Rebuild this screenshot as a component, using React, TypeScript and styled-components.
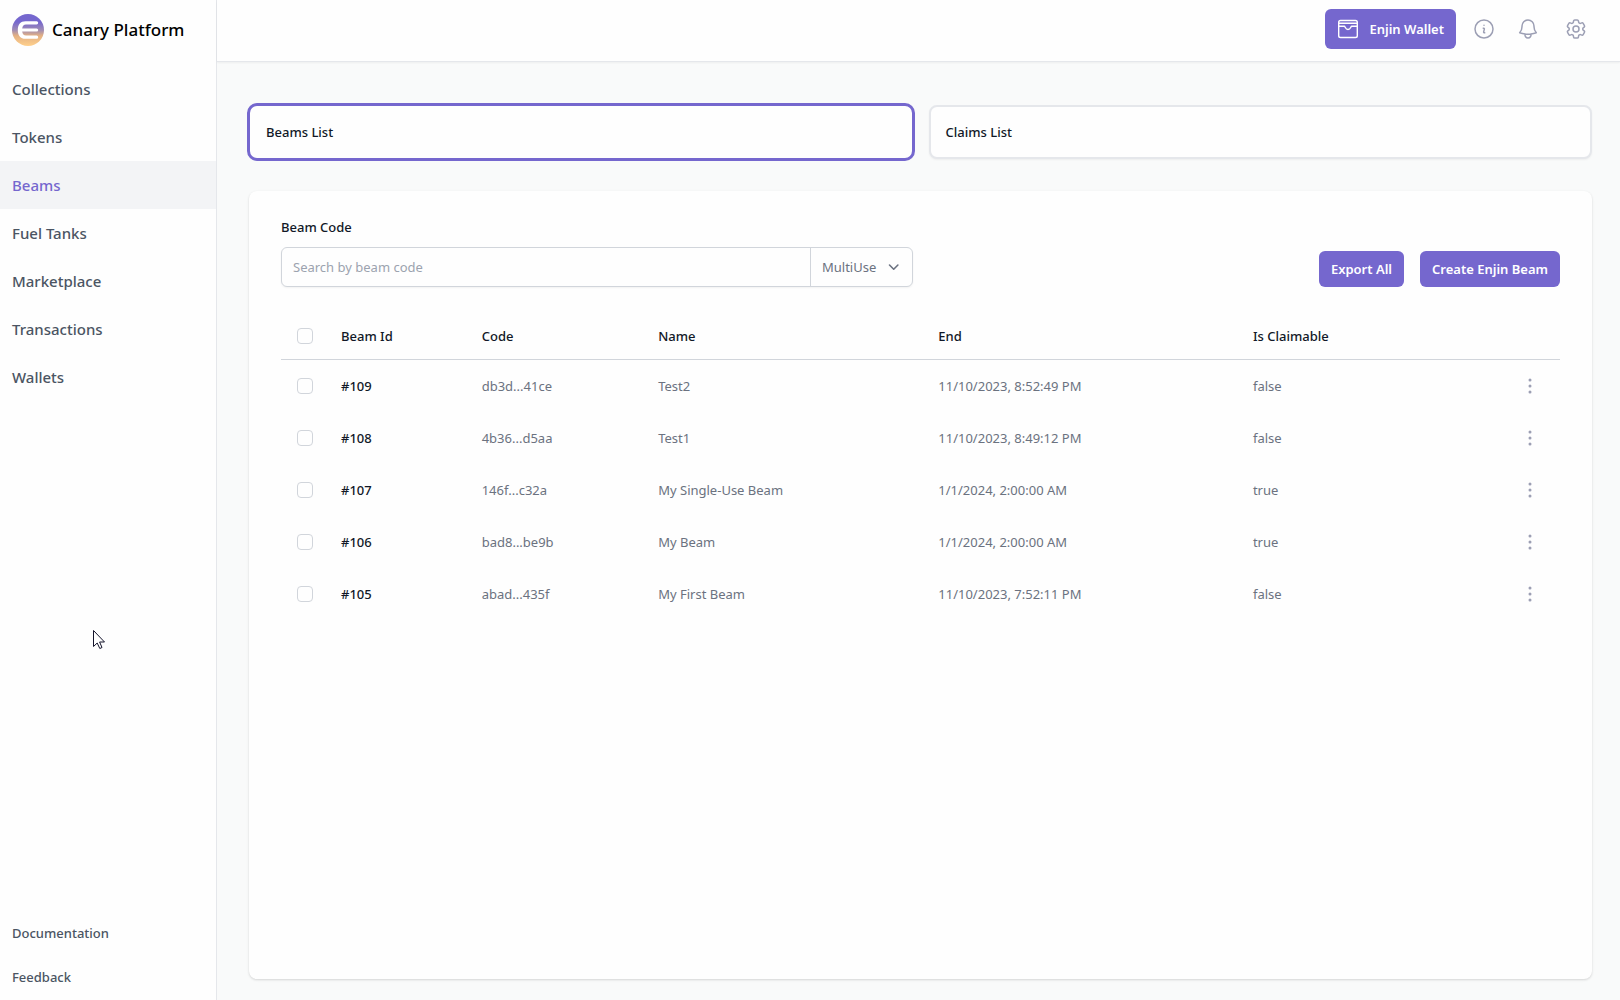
import React from "react";
import styled, { createGlobalStyle } from "styled-components";
import {
  HiOutlineBell,
  HiOutlineCog6Tooth,
  HiOutlineEllipsisVertical,
  HiOutlineInformationCircle,
} from "react-icons/hi2";

const color = {
  brand: "#7567ce",
  ink: "#111827",
  nav: "#4b5563",
  muted: "#6b7280",
  icon: "#9c9fb4",
  line: "#e5e7eb",
  field: "#d1d5db",
  surface: "#fefefe",
  page: "#f9fafa",
};

const GlobalStyle = createGlobalStyle`
  *, *::before, *::after { box-sizing: border-box; }
  body {
    margin: 0;
    background: ${color.page};
    color: ${color.ink};
    font-family: "Segoe UI", "Noto Sans", "Open Sans", sans-serif;
    font-size: 13px;
    line-height: 20px;
  }
  button, input, select { font: inherit; }
`;

const Shell = styled.div`
  display: flex;
  min-height: 100vh;
`;

const Sidebar = styled.aside`
  display: flex;
  flex-direction: column;
  flex: none;
  width: 217px;
  padding-bottom: 1px;
  background: ${color.surface};
  border-right: 1px solid ${color.line};
`;

const Brand = styled.a`
  display: flex;
  align-items: center;
  gap: 8px;
  height: 65px;
  padding: 0 12px 6px;
  color: #000;
  font-size: 17px;
  font-weight: 500;
  line-height: 28px;
  text-decoration: none;
  white-space: nowrap;
`;

const Nav = styled.nav`
  display: flex;
  flex-direction: column;
`;

const FooterNav = styled(Nav)`
  margin-top: auto;
`;

const NavLink = styled.a<{ $active?: boolean }>`
  padding: 12px;
  background: ${(p) => (p.$active ? "#f3f4f6" : "transparent")};
  color: ${(p) => (p.$active ? color.brand : color.nav)};
  font-size: 15px;
  font-weight: 500;
  line-height: 24px;
  text-decoration: none;
`;

const FooterLink = styled(NavLink)`
  font-size: 13px;
  line-height: 20px;
`;

const Column = styled.div`
  display: flex;
  flex-direction: column;
  flex: 1;
  min-width: 0;
`;

const TopBar = styled.header`
  display: flex;
  align-items: center;
  justify-content: flex-end;
  height: 62px;
  padding: 0 32px 4px 32px;
  background: ${color.surface};
  border-bottom: 1px solid ${color.line};
  box-shadow: 0 1px 2px rgba(0, 0, 0, 0.05);
`;

const Button = styled.button<{ $large?: boolean }>`
  display: inline-flex;
  align-items: center;
  justify-content: center;
  gap: 10px;
  height: ${(p) => (p.$large ? 40 : 36)}px;
  padding: 0 12px;
  border: 0;
  border-radius: 6px;
  background: ${color.brand};
  color: #fff;
  font-size: 13px;
  font-weight: 600;
  white-space: nowrap;
`;

const IconGroup = styled.div`
  display: flex;
  gap: 20px;
  margin: 0 24px 0 16px;
`;

const IconButton = styled.button`
  display: inline-flex;
  align-items: center;
  justify-content: center;
  width: 24px;
  height: 24px;
  padding: 0;
  border: 0;
  background: none;
  color: ${color.icon};
  vertical-align: middle;
`;

const Main = styled.main`
  display: flex;
  flex-direction: column;
  flex: 1;
  gap: 32px;
  padding: 43px 28px 21px 32px;
`;

const Tabs = styled.div`
  display: grid;
  grid-template-columns: 1fr 1fr;
  gap: 16px;
`;

const Tab = styled.button<{ $active?: boolean }>`
  padding: 15px;
  border: 2px solid ${(p) => (p.$active ? color.surface : color.line)};
  border-radius: 8px;
  background: ${color.surface};
  box-shadow: ${(p) => (p.$active ? "none" : "0 1px 2px rgba(0, 0, 0, 0.05)")};
  outline: ${(p) => (p.$active ? `3px solid ${color.brand}` : "none")};
  outline-offset: -1px;
  color: ${color.ink};
  font-weight: 500;
  text-align: left;
`;

const Card = styled.section`
  flex: 1;
  padding: 26px 32px 32px;
  border-radius: 8px;
  background: ${color.surface};
  box-shadow: 0 1px 3px rgba(0, 0, 0, 0.1), 0 1px 2px rgba(0, 0, 0, 0.06);
`;

const Toolbar = styled.div`
  display: flex;
  align-items: flex-end;
  justify-content: space-between;
  gap: 32px;
`;

const Search = styled.div`
  flex: 0 1 632px;
`;

const Label = styled.label`
  display: block;
  margin-bottom: 10px;
  font-weight: 500;
`;

const Field = styled.div`
  display: flex;
  height: 40px;
  border: 1px solid ${color.field};
  border-radius: 6px;
  background: ${color.surface};
  box-shadow: 0 1px 2px rgba(0, 0, 0, 0.05);
`;

const TextInput = styled.input`
  flex: 1;
  min-width: 0;
  padding: 0 11px;
  border: 0;
  background: none;
  color: ${color.ink};
  &::placeholder { color: #9ca3af; opacity: 1; }
`;

const SelectWrap = styled.div`
  display: grid;
  align-items: center;
  width: 102px;
  border-left: 1px solid ${color.field};
  color: ${color.muted};
  & > * { grid-area: 1 / 1; }
  & > svg { justify-self: end; margin-right: 11px; pointer-events: none; }
`;

const Select = styled.select`
  width: 100%;
  height: 38px;
  padding: 0 11px;
  border: 0;
  background: none;
  color: ${color.muted};
  appearance: none;
`;

const Actions = styled.div`
  display: flex;
  gap: 16px;
`;

const Table = styled.table`
  width: 100%;
  margin-top: 23px;
  border-collapse: separate;
  border-spacing: 0;
  table-layout: fixed;
`;

const Col = styled.col<{ $width?: string }>`
  width: ${(p) => p.$width ?? "auto"};
`;

const HeadCell = styled.th`
  height: 50px;
  padding: 2px 12px 0;
  border-bottom: 1px solid ${color.field};
  font-weight: 500;
  text-align: left;
`;

const Cell = styled.td<{ $strong?: boolean }>`
  height: 52px;
  padding: 0 12px;
  color: ${(p) => (p.$strong ? color.ink : color.muted)};
  font-weight: ${(p) => (p.$strong ? 500 : 400)};
`;

const CheckCell = styled(Cell)`
  padding: 0 0 0 16px;
`;

const CheckHead = styled(HeadCell)`
  padding: 2px 0 0 16px;
`;

const ActionCell = styled(Cell)`
  padding: 0 18px;
  text-align: right;
`;

const Checkbox = styled.input`
  display: block;
  width: 16px;
  height: 16px;
  margin: 0;
  border: 1px solid ${color.field};
  border-radius: 4px;
  background: ${color.surface};
  appearance: none;
  &:checked { background: ${color.brand}; border-color: ${color.brand}; }
`;

const Pointer = styled.svg`
  position: absolute;
  left: 92px;
  top: 629px;
  pointer-events: none;
`;

const Logo = () => (
  <svg width="32" height="32" viewBox="0 0 32 32" aria-hidden="true">
    <defs>
      <linearGradient id="logoFill" x1="0" y1="0" x2="0" y2="1">
        <stop offset="0.25" stopColor="#7567ce" />
        <stop offset="0.5" stopColor="#a08cb4" />
        <stop offset="0.68" stopColor="#e4b183" />
        <stop offset="1" stopColor="#ffd08c" />
      </linearGradient>
    </defs>
    <circle cx="16" cy="16" r="16" fill="url(#logoFill)" />
    <path
      d="M24.600 7.200H13.500C8.500 7.200 5.800 10.500 5.800 16s2.700 8.800 7.700 8.800H24.600a1.600 1.600 0 0 0 0-3.200H14c-2.200 0-3.500-1.200-3.800-4H24.600a1.600 1.600 0 0 0 0-3.200H10.200c.3-2.800 1.600-4 3.800-4H24.600a1.600 1.600 0 0 0 0-3.200Z"
      fill="#fff"
    />
  </svg>
);

const WalletIcon = () => (
  <svg width="22" height="22" viewBox="0 0 22 22" fill="none" stroke="#fff" strokeWidth="1.400" strokeLinecap="round" strokeLinejoin="round" aria-hidden="true">
    <rect x="1.700" y="2.500" width="18.600" height="17" rx="1.800" />
    <path d="M1.700 5.300H20.300M1.700 8.200H7.300C8.300 8.200 8.200 11.500 11 11.500S13.700 8.200 14.700 8.200H20.300" />
  </svg>
);

const Chevron = () => (
  <svg width="16" height="16" viewBox="0 0 16 16" fill="none" stroke="currentColor" strokeWidth="1.600" strokeLinecap="round" strokeLinejoin="round" aria-hidden="true">
    <path d="M4.500 6L8.700 10.200L12.900 6" />
  </svg>
);

const sections = ["Collections", "Tokens", "Beams", "Fuel Tanks", "Marketplace", "Transactions", "Wallets"];

const columns = ["Beam Id", "Code", "Name", "End", "Is Claimable"];

const beams = [
  { id: "#109", code: "db3d...41ce", name: "Test2", end: "11/10/2023, 8:52:49 PM", claimable: false },
  { id: "#108", code: "4b36...d5aa", name: "Test1", end: "11/10/2023, 8:49:12 PM", claimable: false },
  { id: "#107", code: "146f...c32a", name: "My Single-Use Beam", end: "1/1/2024, 2:00:00 AM", claimable: true },
  { id: "#106", code: "bad8...be9b", name: "My Beam", end: "1/1/2024, 2:00:00 AM", claimable: true },
  { id: "#105", code: "abad...435f", name: "My First Beam", end: "11/10/2023, 7:52:11 PM", claimable: false },
];

export default function App() {
  return (
    <>
      <GlobalStyle />
      <Shell>
        <Sidebar>
          <Brand href="#">
            <Logo />
            Canary Platform
          </Brand>
          <Nav>
            {sections.map((name) => (
              <NavLink key={name} href="#" $active={name === "Beams"}>
                {name}
              </NavLink>
            ))}
          </Nav>
          <FooterNav>
            <FooterLink href="#">Documentation</FooterLink>
            <FooterLink href="#">Feedback</FooterLink>
          </FooterNav>
        </Sidebar>
        <Column>
          <TopBar>
            <Button $large>
              <WalletIcon />
              Enjin Wallet
            </Button>
            <IconGroup>
              <IconButton aria-label="Information">
                <HiOutlineInformationCircle size={24} />
              </IconButton>
              <IconButton aria-label="Notifications">
                <HiOutlineBell size={24} />
              </IconButton>
            </IconGroup>
            <IconButton aria-label="Settings">
              <HiOutlineCog6Tooth size={24} />
            </IconButton>
          </TopBar>
          <Main>
            <Tabs>
              <Tab $active>Beams List</Tab>
              <Tab>Claims List</Tab>
            </Tabs>
            <Card>
              <Toolbar>
                <Search>
                  <Label htmlFor="beam-code">Beam Code</Label>
                  <Field>
                    <TextInput id="beam-code" type="text" placeholder="Search by beam code" />
                    <SelectWrap>
                      <Select aria-label="Beam type" defaultValue="MultiUse">
                        <option>MultiUse</option>
                      </Select>
                      <Chevron />
                    </SelectWrap>
                  </Field>
                </Search>
                <Actions>
                  <Button>Export All</Button>
                  <Button>Create Enjin Beam</Button>
                </Actions>
              </Toolbar>
              <Table>
                <colgroup>
                  <Col $width="48px" />
                  <Col $width="11%" />
                  <Col $width="13.8%" />
                  <Col $width="21.9%" />
                  <Col $width="24.6%" />
                  <Col />
                  <Col $width="60px" />
                </colgroup>
                <thead>
                  <tr>
                    <CheckHead>
                      <Checkbox type="checkbox" aria-label="Select all beams" />
                    </CheckHead>
                    {columns.map((name) => (
                      <HeadCell key={name}>{name}</HeadCell>
                    ))}
                    <HeadCell />
                  </tr>
                </thead>
                <tbody>
                  {beams.map((beam) => (
                    <tr key={beam.id}>
                      <CheckCell>
                        <Checkbox type="checkbox" aria-label={`Select beam ${beam.id}`} />
                      </CheckCell>
                      <Cell $strong>{beam.id}</Cell>
                      <Cell>{beam.code}</Cell>
                      <Cell>{beam.name}</Cell>
                      <Cell>{beam.end}</Cell>
                      <Cell>{String(beam.claimable)}</Cell>
                      <ActionCell>
                        <IconButton aria-label={`Actions for beam ${beam.id}`}>
                          <HiOutlineEllipsisVertical size={24} />
                        </IconButton>
                      </ActionCell>
                    </tr>
                  ))}
                </tbody>
              </Table>
            </Card>
          </Main>
        </Column>
      </Shell>
      <Pointer width="14" height="21" viewBox="0 0 14 21" aria-hidden="true">
        <path
          d="M1.500 1.500V17.500L5.200 14l2.600 5.500 2.200-1L7.600 13H12.500Z"
          fill="#fff"
          stroke="#14142b"
        />
      </Pointer>
    </>
  );
}
